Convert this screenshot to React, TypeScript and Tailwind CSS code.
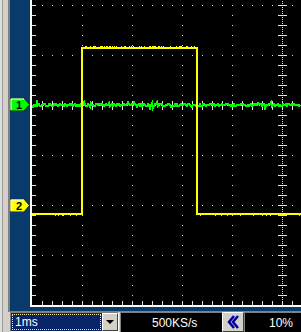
import React from "react";

const W = 269;
const H = 305;

// small seeded generator so the noise is the same every render
function rng(seed: number) {
  let s = seed;
  return () => {
    s = (s * 1103515245 + 12345) % 2147483648;
    return s / 2147483648;
  };
}

const Scope = () => {
  const grid: React.ReactNode[] = [];
  const dot = "#e4e4e4";

  // horizontal dotted grid rows
  [5, 55, 155, 205, 255].forEach((y) => {
    for (let x = 10; x < W; x += 10) grid.push(<rect key={`r${y}-${x}`} x={x} y={y} width={1} height={1} fill={dot} />);
  });
  // vertical dotted grid columns
  [50, 100, 150, 200].forEach((x) => {
    for (let y = 5; y < H; y += 10) grid.push(<rect key={`c${x}-${y}`} x={x} y={y} width={1} height={1} fill={dot} />);
  });
  // vertical axis with ticks
  for (let y = 1; y < H; y += 2) grid.push(<rect key={`va${y}`} x={250} y={y} width={1} height={1} fill={dot} />);
  for (let y = 5; y < H; y += 10) grid.push(<rect key={`vt${y}`} x={246} y={y} width={9} height={1} fill={dot} />);
  // horizontal axis with ticks
  for (let x = 1; x < W; x += 2) grid.push(<rect key={`ha${x}`} x={x} y={105} width={1} height={1} fill={dot} />);
  for (let x = 10; x < W; x += 10) grid.push(<rect key={`ht${x}`} x={x} y={101} width={1} height={9} fill={dot} />);
  // edge ticks
  for (let y = 5; y < H; y += 10) grid.push(<rect key={`lt${y}`} x={0} y={y} width={4} height={1} fill={dot} />);
  for (let x = 10; x < W; x += 10) grid.push(<rect key={`bt${x}`} x={x} y={301} width={1} height={4} fill={dot} />);

  // channel 1: noisy flat line
  const r = rng(7);
  const green: string[] = [];
  for (let x = 0; x < W; x++) {
    const v = r();
    let dy = v < 0.3 ? -1 : v < 0.7 ? 0 : 1;
    if (r() > 0.9) dy += r() > 0.5 ? 2 : -2;
    green.push(`${x},${105 + dy}`);
  }

  // channel 2: pulse
  const r2 = rng(3);
  const yNoise: React.ReactNode[] = [];
  for (let x = 51; x < 164; x++) {
    if (r2() > 0.55) yNoise.push(<rect key={`yh${x}`} x={x} y={46} width={1} height={1} fill="#ffff00" />);
  }
  for (let x = 0; x < W; x++) {
    if ((x < 49 || x > 166) && r2() > 0.85) yNoise.push(<rect key={`yl${x}`} x={x} y={215} width={1} height={1} fill="#ffff00" />);
  }

  return (
    <svg width={W} height={H} shapeRendering="crispEdges" className="block">
      {grid}
      <polyline points={green.join(" ")} fill="none" stroke="#00ff00" strokeWidth={2} />
      <polyline
        points="0,214 49.5,214 49.5,48 164.5,48 164.5,214 269,214"
        fill="none"
        stroke="#ffff00"
        strokeWidth={2}
      />
      {yNoise}
    </svg>
  );
};

const Marker = ({ label, color, top }: { label: string; color: string; top: string }) => (
  <div className={`absolute left-0 ${top} w-[20px] h-[13px]`}>
    <svg width={20} height={13} className="block">
      <polygon points="0,0 14,0 19.5,6.5 14,13 0,13" fill={color} stroke="#1a1a1a" strokeWidth={1} />
      <polyline points="1,12 1,1 14,1" fill="none" stroke="#ffffff" strokeWidth={1} />
      <text x={9} y={11} fontSize={11} fontWeight="bold" fill="#000" fontFamily="Liberation Sans, Arial, sans-serif" textAnchor="middle">
        {label}
      </text>
    </svg>
  </div>
);

export default function App() {
  return (
    <div className="w-[301px] h-[332px] flex bg-[#d4d0c8] overflow-hidden font-['Liberation_Sans',Arial,sans-serif]">
      <div className="w-[2px] bg-[#dcdcdc]" />
      <div className="w-[1px] bg-[#9c9c9c]" />
      <div className="flex-1 flex flex-col">
        <div className="ml-[5px] h-[312px] flex border-l-2 border-b border-[#808080] bg-[#083a6b] pb-[4px]">
          <div className="relative w-[20px]">
            <Marker label="1" color="#00ff00" top="top-[98px]" />
            <Marker label="2" color="#ffff00" top="top-[199px]" />
          </div>
          <div className="flex-1 border-l-2 border-b-2 border-white bg-black overflow-hidden">
            <Scope />
          </div>
        </div>

        <div className="flex h-[20px] text-[12px] leading-none">
          <div className="ml-[7px] w-[109px] flex border-t border-l border-[#808080] border-r border-r-white border-b border-b-white">
            <div className="flex-1 bg-[#0a246a] p-[1px]">
              <div className="h-full border border-dotted border-[#f0e8a0] flex items-center pl-[2px] text-white">1ms</div>
            </div>
            <div className="w-[16px] flex items-center justify-center bg-[#d4d0c8] border-t border-l border-white border-r border-r-[#404040] border-b border-b-[#404040]">
              <div className="w-0 h-0 border-l-[4px] border-r-[4px] border-t-[4px] border-l-transparent border-r-transparent border-t-black" />
            </div>
          </div>
          <div className="ml-[1px] w-[102px] bg-black border-t border-l border-[#808080] flex items-center pl-[31px] text-white">500KS/s</div>
          <div className="w-[22px] flex items-center justify-center bg-[#d4d0c8] border-t border-l border-white border-r border-r-[#404040] border-b border-b-[#404040]">
            <svg width={14} height={14} className="block">
              <polyline points="8,1 3,7 8,13" fill="none" stroke="#0000a0" strokeWidth={2.5} />
              <polyline points="12,1 7,7 12,13" fill="none" stroke="#0000a0" strokeWidth={2.5} />
            </svg>
          </div>
          <div className="flex-1 bg-black border-t border-l border-[#808080] flex items-center justify-end pr-[8px] text-white">10%</div>
        </div>
      </div>
    </div>
  );
}
